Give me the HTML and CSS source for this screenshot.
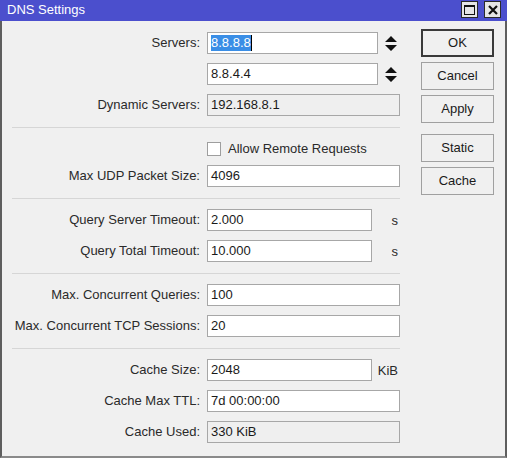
FILE: index.html
```html
<!DOCTYPE html>
<html>
<head>
<meta charset="utf-8">
<title>DNS Settings</title>
<link rel="stylesheet" href="styles.css">
</head>
<body>
<div class="window">
  <div class="titlebar">
    <span class="title">DNS Settings</span>
    <div class="tb-buttons">
      <span class="tb-btn"><span class="max-glyph"></span></span>
      <span class="tb-btn">
        <svg class="close-glyph" width="10" height="10" viewBox="0 0 10 10"><path d="M1 1 L9 9 M9 1 L1 9" stroke="#111" stroke-width="2.2" fill="none"/></svg>
      </span>
    </div>
  </div>
  <div class="content">
    <div class="form">
      <div class="section">
        <span class="lbl">Servers:</span>
        <div class="field">
          <div class="input w-spin"><span class="sel">8.8.8.8</span><span class="caret"></span></div>
          <svg class="spin" width="12" height="15" viewBox="0 0 12 15"><path d="M6 0 L12 6 L0 6 Z M0 9 L12 9 L6 15 Z" fill="#111"/></svg>
        </div>
        <span class="lbl"></span>
        <div class="field">
          <div class="input w-spin">8.8.4.4</div>
          <svg class="spin" width="12" height="15" viewBox="0 0 12 15"><path d="M6 0 L12 6 L0 6 Z M0 9 L12 9 L6 15 Z" fill="#111"/></svg>
        </div>
        <span class="lbl">Dynamic Servers:</span>
        <div class="field"><div class="input ro full">192.168.8.1</div></div>
      </div>
      <div class="sep"></div>
      <div class="section sec-check">
        <span class="lbl"></span>
        <div class="check-row"><span class="checkbox"></span><span class="check-text">Allow Remote Requests</span></div>
        <span class="lbl">Max UDP Packet Size:</span>
        <div class="field"><div class="input full">4096</div></div>
      </div>
      <div class="sep"></div>
      <div class="section">
        <span class="lbl">Query Server Timeout:</span>
        <div class="field"><div class="input w-unit">2.000</div><span class="unit">s</span></div>
        <span class="lbl">Query Total Timeout:</span>
        <div class="field"><div class="input w-unit">10.000</div><span class="unit">s</span></div>
      </div>
      <div class="sep"></div>
      <div class="section">
        <span class="lbl">Max. Concurrent Queries:</span>
        <div class="field"><div class="input full">100</div></div>
        <span class="lbl">Max. Concurrent TCP Sessions:</span>
        <div class="field"><div class="input full">20</div></div>
      </div>
      <div class="sep"></div>
      <div class="section">
        <span class="lbl">Cache Size:</span>
        <div class="field"><div class="input w-unit">2048</div><span class="unit">KiB</span></div>
        <span class="lbl">Cache Max TTL:</span>
        <div class="field"><div class="input full">7d 00:00:00</div></div>
        <span class="lbl">Cache Used:</span>
        <div class="field"><div class="input ro full">330 KiB</div></div>
      </div>
    </div>
    <div class="buttons">
      <div class="btn default">OK</div>
      <div class="btn">Cancel</div>
      <div class="btn">Apply</div>
      <div class="btn gap">Static</div>
      <div class="btn">Cache</div>
    </div>
  </div>
</div>
</body>
</html>
```

FILE: styles.css
```css
* { box-sizing: border-box; }
html, body { margin: 0; padding: 0; }
body {
  width: 507px;
  height: 458px;
  overflow: hidden;
  font-family: "Liberation Sans", Arial, sans-serif;
  font-size: 13px;
  color: #222;
  background: #f0f0f0;
}
.window {
  width: 507px;
  height: 458px;
  display: flex;
  flex-direction: column;
}
.titlebar {
  height: 21px;
  background: #4b4fcd;
  display: flex;
  align-items: flex-start;
  justify-content: space-between;
  flex: none;
}
.title {
  color: #fff;
  font-size: 13px;
  line-height: 20px;
  padding-left: 7px;
}
.tb-buttons {
  display: flex;
  gap: 6px;
  padding-top: 1px;
  padding-right: 6px;
}
.tb-btn {
  width: 17px;
  height: 17px;
  background: #e6e6e6;
  border: 1px solid #2a2a2a;
  display: flex;
  align-items: center;
  justify-content: center;
}
.max-glyph {
  width: 11px;
  height: 10px;
  border: 1px solid #111;
  border-top-width: 2px;
}
.content {
  flex: 1;
  display: flex;
  align-items: flex-start;
  border-left: 2px solid #5e5e5e;
  border-right: 2px solid #5e5e5e;
  border-bottom: 2px solid #8a8a8a;
  padding-top: 8px;
}
.form {
  width: 388px;
  margin-left: 10px;
  padding-top: 3px;
}
.section {
  display: grid;
  grid-template-columns: 188px 193px;
  grid-auto-rows: 22px;
  column-gap: 7px;
  row-gap: 9px;
}
.sec-check {
  grid-template-rows: 18px 22px;
}
.lbl {
  text-align: right;
  line-height: 22px;
  white-space: nowrap;
  color: #2a2a2a;
}
.field {
  display: flex;
  align-items: center;
}
.input {
  height: 22px;
  border: 1px solid #a7a7a7;
  background: #fff;
  line-height: 20px;
  padding: 0 3px;
  color: #1a1a1a;
  white-space: nowrap;
  display: flex;
  align-items: center;
}
.input.ro { background: #efefef; }
.full { width: 193px; }
.w-spin { width: 171px; }
.w-unit { width: 165px; }
.spin { margin-left: 7px; flex: none; }
.unit {
  width: 28px;
  text-align: right;
  padding-right: 2px;
  color: #2a2a2a;
}
.sel {
  background: #3a8ee6;
  color: #fff;
  line-height: 16px;
}
.caret {
  width: 1px;
  height: 16px;
  background: #000;
}
.check-row {
  display: flex;
  align-items: flex-start;
  padding-top: 4px;
}
.checkbox {
  width: 14px;
  height: 14px;
  background: #fff;
  border: 1px solid #9e9e9e;
  flex: none;
}
.check-text {
  margin-left: 7px;
  line-height: 14px;
  color: #2a2a2a;
}
.sep {
  height: 1px;
  background: #d6d6d6;
  margin: 11px 0 10px;
}
.buttons {
  margin-left: 21px;
  width: 73px;
  display: flex;
  flex-direction: column;
  gap: 5px;
}
.btn {
  height: 28px;
  border: 1px solid #a0a0a0;
  background: #f0f0f0;
  text-align: center;
  line-height: 26px;
  color: #1a1a1a;
}
.btn.default {
  border: 2px solid #3a3a3a;
  line-height: 24px;
}
.btn.gap { margin-top: 6px; }
```
